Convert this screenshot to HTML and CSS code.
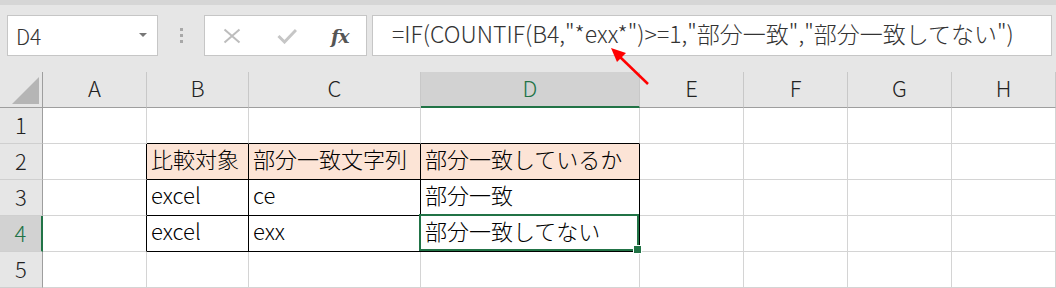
FILE: index.html
```html
<!DOCTYPE html>
<html lang="ja">
<head>
<meta charset="utf-8">
<title>Excel 部分一致</title>
<link rel="stylesheet" href="styles.css">
</head>
<body>
<div class="app">
  <div class="toolbar">
    <div class="namebox"><span class="ref">D4</span><span class="dd"></span></div>
    <div class="grip"><i></i><i></i><i></i></div>
    <div class="btns">
      <svg class="ico" width="18" height="16" viewBox="0 0 18 16"><path d="M1.5 1.5 L16.5 14.5 M16.5 1.5 L1.5 14.5" stroke="#bdbdbd" stroke-width="2" fill="none"/></svg>
      <svg class="ico" width="20" height="16" viewBox="0 0 20 16"><path d="M1.5 8 L7.5 14 L19 2" stroke="#c6c6c6" stroke-width="3" fill="none"/></svg>
      <span class="fx">fx</span>
    </div>
    <div class="formula">=IF(COUNTIF(B4,"*exx*")&gt;=1,"部分一致","部分一致してない")</div>
  </div>
  <div class="sheet">
    <div class="c corner"><svg width="28" height="28" viewBox="0 0 28 28"><polygon points="27,0 27,27 0,27" fill="#b5b5b5"/></svg></div>
    <div class="c ch">A</div>
    <div class="c ch">B</div>
    <div class="c ch">C</div>
    <div class="c ch sel">D</div>
    <div class="c ch">E</div>
    <div class="c ch">F</div>
    <div class="c ch">G</div>
    <div class="c ch">H</div>

    <div class="c rh">1</div>
    <div class="c"></div>
    <div class="c bb"></div>
    <div class="c bb"></div>
    <div class="c bb"></div>
    <div class="c"></div><div class="c"></div><div class="c"></div><div class="c"></div>

    <div class="c rh">2</div>
    <div class="c br"></div>
    <div class="c tb head">比較対象</div>
    <div class="c tb head">部分一致文字列</div>
    <div class="c tb head">部分一致しているか</div>
    <div class="c"></div><div class="c"></div><div class="c"></div><div class="c"></div>

    <div class="c rh">3</div>
    <div class="c br"></div>
    <div class="c tb">excel</div>
    <div class="c tb">ce</div>
    <div class="c tb">部分一致</div>
    <div class="c"></div><div class="c"></div><div class="c"></div><div class="c"></div>

    <div class="c rh sel">4</div>
    <div class="c br"></div>
    <div class="c tb">excel</div>
    <div class="c tb">exx</div>
    <div class="c tb active">部分一致してない</div>
    <div class="c"></div><div class="c"></div><div class="c"></div><div class="c"></div>

    <div class="c rh">5</div>
    <div class="c"></div><div class="c"></div><div class="c"></div><div class="c"></div>
    <div class="c"></div><div class="c"></div><div class="c"></div><div class="c"></div>
  </div>
  <svg class="arrow" width="1056" height="288" viewBox="0 0 1056 288">
    <line x1="648" y1="84" x2="619" y2="56" stroke="#ff0000" stroke-width="2.5"/>
    <polygon points="611,48 626,53 617,62" fill="#ff0000"/>
  </svg>
</div>
</body>
</html>
```
FILE: styles.css
```css
* { box-sizing: border-box; }
html, body { margin: 0; padding: 0; }
body {
  width: 1056px;
  height: 288px;
  overflow: hidden;
  background: #e6e6e6;
  font-family: "Noto Sans CJK JP", "Noto Sans", sans-serif;
  font-weight: 300;
  color: #000;
}
.app { position: relative; width: 1056px; height: 288px; }

.toolbar {
  height: 72px;
  border-top: 5px solid #d6d6d6;
  padding: 10px 0 16px 7px;
  display: flex;
  align-items: stretch;
}
.namebox {
  width: 151px;
  height: 41px;
  background: #fff;
  border: 1px solid #c6c6c6;
  display: flex;
  align-items: center;
  justify-content: space-between;
  padding: 0 10px 0 8px;
}
.ref { font-size: 21px; color: #333; line-height: 1; padding-top: 2px; }
.dd {
  width: 0; height: 0;
  border-left: 4px solid transparent;
  border-right: 4px solid transparent;
  border-top: 4px solid #777;
  margin-top: -2px;
}
.grip {
  width: 46px;
  display: flex;
  flex-direction: column;
  align-items: center;
  justify-content: center;
  gap: 3px;
}
.grip i { display: block; width: 3px; height: 3px; background: #a8a8a8; }
.btns {
  width: 163px;
  height: 41px;
  background: #fff;
  border: 1px solid #c6c6c6;
  display: flex;
  align-items: center;
  padding-left: 18px;
  gap: 36px;
}
.fx {
  font-family: "DejaVu Serif", "Liberation Serif", serif;
  font-style: italic;
  font-weight: bold;
  font-size: 19px;
  color: #555;
  margin-left: -2px;
  letter-spacing: -1px;
}
.formula {
  margin-left: 5px;
  width: 680px;
  height: 41px;
  background: #fff;
  border: 1px solid #c6c6c6;
  padding-left: 19px;
  font-size: 23px;
  line-height: 34px;
  color: #333;
  white-space: nowrap;
}

.sheet {
  display: grid;
  grid-template-columns: 43px 104px 102px 172px 219px 104px 104px 104px 104px;
  grid-auto-rows: 36px;
  background: #fff;
}
.c {
  border-right: 1px solid #d4d4d4;
  border-bottom: 1px solid #d4d4d4;
  font-size: 22px;
  line-height: 29px;
  padding-left: 4px;
  white-space: nowrap;
  position: relative;
}
.ch {
  background: #e6e6e6;
  border-right-color: #c8c8c8;
  border-bottom-color: #9e9e9e;
  text-align: center;
  padding-left: 0;
  font-size: 22px;
  line-height: 30px;
  color: #222;
}
.corner {
  background: #e6e6e6;
  border-right-color: #9e9e9e;
  border-bottom-color: #9e9e9e;
  padding: 5px 0 0 12px;
  line-height: 0;
}
.rh {
  background: #e6e6e6;
  border-right-color: #9e9e9e;
  border-bottom-color: #cfcfcf;
  text-align: center;
  padding-left: 0;
  font-size: 22px;
  line-height: 32px;
  color: #222;
}
.ch.sel {
  background: #d2d2d2;
  color: #217346;
  border-bottom: 2px solid #217346;
}
.rh.sel {
  background: #d2d2d2;
  color: #217346;
  border-right: 2px solid #217346;
}
.bb { border-bottom-color: #000; }
.br { border-right-color: #000; }
.tb { border-right-color: #000; border-bottom-color: #000; }
.head { background: #fce4d6; }
.active { z-index: 2; }
.active::after {
  content: "";
  position: absolute;
  left: -2px; top: -2px; right: 0; bottom: 0;
  border: 2px solid #217346;
}
.active::before {
  content: "";
  position: absolute;
  right: -3px; bottom: -3px;
  width: 7px; height: 7px;
  background: #217346;
  border: 1px solid #fff;
  z-index: 3;
}
.arrow { position: absolute; left: 0; top: 0; pointer-events: none; }
```
